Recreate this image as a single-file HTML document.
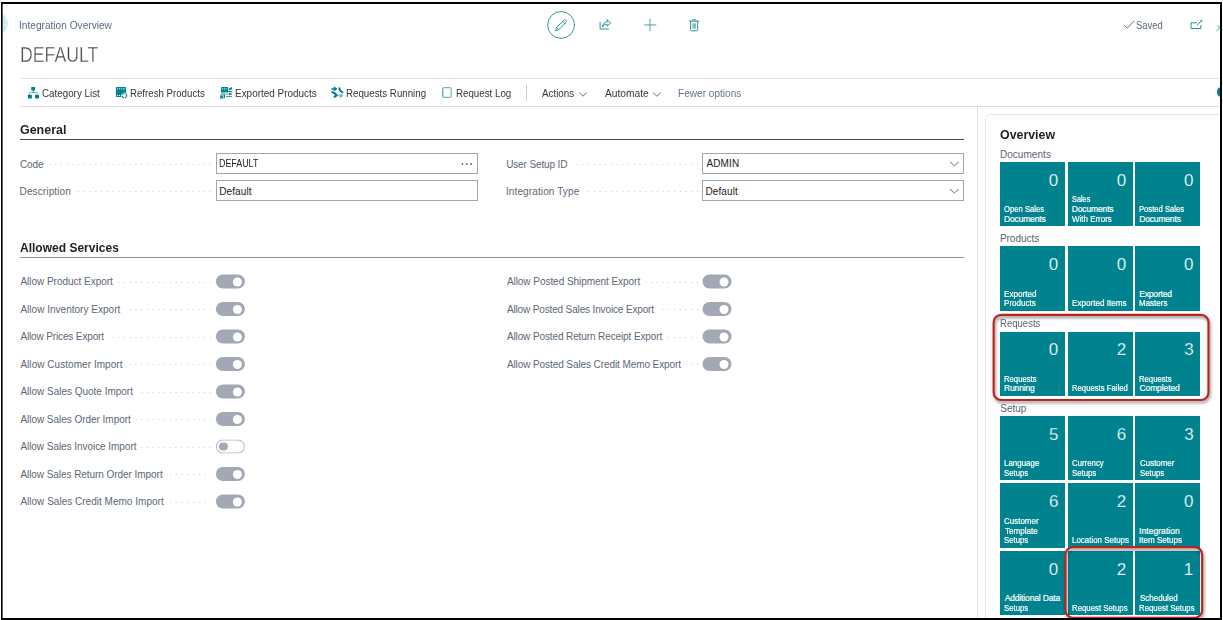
<!DOCTYPE html>
<html lang="en">
<head>
<meta charset="utf-8">
<title>Integration Overview - DEFAULT</title>
<style>
html,body{margin:0;padding:0;background:#fff;}
body{width:1223px;height:620px;position:relative;overflow:hidden;font-family:"Liberation Sans",sans-serif;}
#app{position:absolute;left:0;top:0;width:1223px;height:620px;overflow:hidden;}
.t{position:absolute;white-space:nowrap;line-height:normal;font-family:"Liberation Sans",sans-serif;}
.hl{position:absolute;height:1px;background:#dfe1e7;}
.vl{position:absolute;width:1px;background:#dfe1e7;}
.inp{position:absolute;box-sizing:border-box;height:21px;border:1px solid #9fa5b3;background:#fff;}
.dots{position:absolute;height:1px;background-image:linear-gradient(90deg,rgba(0,0,0,0) 0,rgba(0,0,0,0) 4.74px,#c3c7cf 4.74px,#c3c7cf 5.74px);background-size:5.74px 1px;background-position:right top;background-repeat:repeat-x;}
.tog{position:absolute;left:0;top:0;width:28.8px;height:14.3px;border-radius:7.2px;background:#a2a8b4;}
.tog b{position:absolute;left:17px;top:2.55px;width:9.2px;height:9.2px;border-radius:50%;background:#fff;}
.tog.off{background:#fff;box-shadow:inset 0 0 0 1px #b4b9c3;}
.tog.off b{left:3px;top:2.85px;width:8.6px;height:8.6px;background:#a3aab7;}
.tile{position:absolute;width:64.8px;height:64.3px;background:#00838f;}
.card{position:absolute;left:985px;top:114px;width:260px;height:530px;border:1px solid #e4e6eb;border-radius:5px;box-sizing:border-box;background:#fff;}
svg{position:absolute;left:0;top:0;overflow:visible;}
</style>
</head>
<body>
<div id="app">
  <!-- header -->
  <header>
    <div style="position:absolute;left:-13.4px;top:12.6px;width:21px;height:21px;border-radius:50%;background:#d3eef2"></div>
  </header>

  <!-- toolbar rules -->
  <div class="hl" style="left:20px;top:78px;width:1203px"></div>
  <div class="hl" style="left:20px;top:106px;width:1203px;background:#dcdee3"></div>
  <div class="vl" style="left:526px;top:85px;height:16px;background:#c9ccd3"></div>
  <div style="position:absolute;left:1216.6px;top:87.4px;width:9.6px;height:9.6px;border-radius:50%;background:#00838c"></div>

  <!-- section rules -->
  <div class="hl" style="left:20px;top:139px;width:944px;background:#3f4a5e"></div>
  <div class="hl" style="left:20px;top:257.4px;width:944px;background:#8a93a3"></div>

  <!-- inputs -->
  <div class="inp" style="left:216px;top:153px;width:261.5px"></div>
  <div class="inp" style="left:216px;top:180px;width:261.5px"></div>
  <div class="inp" style="left:702px;top:153px;width:262.4px"></div>
  <div class="inp" style="left:702px;top:180px;width:262.4px"></div>

  <!-- factbox pane -->
  <div class="vl" style="left:977px;top:107px;height:520px"></div>
  <aside class="card"></aside>

<div class="dots" style="left:48.2px;width:162.8px;top:164.00px"></div>
<div class="dots" style="left:75.2px;width:135.8px;top:191.20px"></div>
<div class="dots" style="left:572.0px;width:126.0px;top:164.00px"></div>
<div class="dots" style="left:583.8px;width:114.2px;top:191.20px"></div>
<div class="dots" style="left:117.8px;width:93.2px;top:281.75px"></div>
<div class="dots" style="left:125.2px;width:85.8px;top:309.25px"></div>
<div class="dots" style="left:109.0px;width:102.0px;top:336.75px"></div>
<div class="dots" style="left:127.4px;width:83.6px;top:364.25px"></div>
<div class="dots" style="left:137.9px;width:73.1px;top:391.75px"></div>
<div class="dots" style="left:135.7px;width:75.3px;top:419.25px"></div>
<div class="dots" style="left:141.4px;width:69.6px;top:446.75px"></div>
<div class="dots" style="left:167.6px;width:43.4px;top:474.25px"></div>
<div class="dots" style="left:168.6px;width:42.4px;top:501.75px"></div>
<div class="dots" style="left:645.1px;width:52.9px;top:281.75px"></div>
<div class="dots" style="left:659.0px;width:39.0px;top:309.25px"></div>
<div class="dots" style="left:667.2px;width:30.8px;top:336.75px"></div>
<div class="dots" style="left:686.0px;width:12.0px;top:364.25px"></div>
<div class="tog" style="transform:translate(215.9px,274.50px)"><b></b></div>
<div class="tog" style="transform:translate(215.9px,302.00px)"><b></b></div>
<div class="tog" style="transform:translate(215.9px,329.50px)"><b></b></div>
<div class="tog" style="transform:translate(215.9px,357.00px)"><b></b></div>
<div class="tog" style="transform:translate(215.9px,384.50px)"><b></b></div>
<div class="tog" style="transform:translate(215.9px,412.00px)"><b></b></div>
<div class="tog off" style="transform:translate(215.9px,439.50px)"><b></b></div>
<div class="tog" style="transform:translate(215.9px,467.00px)"><b></b></div>
<div class="tog" style="transform:translate(215.9px,494.50px)"><b></b></div>
<div class="tog" style="transform:translate(702.5px,274.50px)"><b></b></div>
<div class="tog" style="transform:translate(702.5px,302.00px)"><b></b></div>
<div class="tog" style="transform:translate(702.5px,329.50px)"><b></b></div>
<div class="tog" style="transform:translate(702.5px,357.00px)"><b></b></div>
<div class="tile" style="left:1000.1px;top:161.7px"></div>
<div class="tile" style="left:1067.9px;top:161.7px"></div>
<div class="tile" style="left:1135.3px;top:161.7px"></div>
<div class="tile" style="left:1000.1px;top:246.4px"></div>
<div class="tile" style="left:1067.9px;top:246.4px"></div>
<div class="tile" style="left:1135.3px;top:246.4px"></div>
<div class="tile" style="left:1000.1px;top:331.6px"></div>
<div class="tile" style="left:1067.9px;top:331.6px"></div>
<div class="tile" style="left:1135.3px;top:331.6px"></div>
<div class="tile" style="left:1000.1px;top:416.0px"></div>
<div class="tile" style="left:1067.9px;top:416.0px"></div>
<div class="tile" style="left:1135.3px;top:416.0px"></div>
<div class="tile" style="left:1000.1px;top:483.4px"></div>
<div class="tile" style="left:1067.9px;top:483.4px"></div>
<div class="tile" style="left:1135.3px;top:483.4px"></div>
<div class="tile" style="left:1000.1px;top:551.2px"></div>
<div class="tile" style="left:1067.9px;top:551.2px"></div>
<div class="tile" style="left:1135.3px;top:551.2px"></div>

  <svg width="1223" height="620" viewBox="0 0 1223 620">
    <defs>
      <filter id="sh" x="-10%" y="-10%" width="125%" height="130%">
        <feGaussianBlur in="SourceAlpha" stdDeviation="1.4"/>
        <feOffset dx="1.3" dy="2.4"/>
        <feComponentTransfer><feFuncA type="linear" slope="0.5"/></feComponentTransfer>
        <feMerge><feMergeNode/><feMergeNode in="SourceGraphic"/></feMerge>
      </filter>
    </defs>
        <g id="hdr-icons" fill="none" stroke="#00838c" stroke-linecap="round" stroke-linejoin="round">
      <!-- edit -->
      <circle cx="561.1" cy="24.95" r="13.45" stroke-width="0.95" opacity=".85"/>
      <g transform="translate(555.5 30.5) rotate(-43.7)" stroke-width="0.85" opacity=".9">
        <path d="M0 0L3 -1.55H13.1A1.55 1.55 0 0 1 13.1 1.55H3Z"/>
        <path d="M3 -1.55V1.55M11.6 -1.55V1.55"/>
      </g>
      <!-- share -->
      <g stroke-width="0.95" opacity=".9">
        <path d="M600.1 22.4V29H608.6"/>
        <path d="M607.2 19.9L610.7 23L607.2 26.1V24.3C604.9 24.3 603.5 25.1 602.4 27.1C602.6 24 604.5 22 607.2 21.8Z"/>
      </g>
      <!-- new -->
      <path d="M644.3 24.95H655.9M650.05 19.2V30.8" stroke-width="1" opacity=".7"/>
      <!-- delete -->
      <g stroke-width="0.95" opacity=".9">
        <path d="M689.6 21.1H698.6M692.4 21V20.6A1.2 1.2 0 0 1 693.6 19.5H694.7A1.2 1.2 0 0 1 695.9 20.6V21"/>
        <path d="M690.6 21.3V29.6A1.2 1.2 0 0 0 691.8 30.8H696.5A1.2 1.2 0 0 0 697.7 29.6V21.3"/>
        <path d="M692.3 23.3H696V28.6H692.3Z" fill="#00838c" fill-opacity=".55" stroke="none"/>
      </g>
      <!-- saved tick -->
      <path d="M1124.4 25.4L1127.2 28.2L1134.3 20.8" stroke="#596779" stroke-width="0.9"/>
      <!-- open in new window -->
      <g stroke-width="0.95" opacity=".9">
        <path d="M1196.6 22.8H1191V28.5H1200.8V25.4"/>
        <path d="M1197.3 24.7L1201.3 21"/>
        <circle cx="1201.4" cy="20.9" r="0.9" fill="#00838c" stroke="none"/>
      </g>
      <path d="M1216.6 30.9L1221 26.4M1217.8 25.9L1221 27.6" stroke-width="0.9" opacity=".8"/>
    </g>
    <g id="tb-icons" fill="#00838c" stroke="none">
      <!-- category list -->
      <rect x="31.2" y="86.9" width="3.9" height="3.6" rx=".4"/>
      <rect x="32.8" y="90.3" width=".9" height="2.4"/>
      <path d="M29.2 94.9V92.9A.9.9 0 0 1 30.1 92H36.5A.9.9 0 0 1 37.4 92.9V94.9H36.5V93H30.1V94.9Z" opacity=".55"/>
      <rect x="27.9" y="94.8" width="4" height="3.6" rx=".4"/>
      <rect x="35" y="94.8" width="4" height="3.6" rx=".4"/>
      <!-- refresh products -->
      <path d="M116.6 87H125.4A.7.7 0 0 1 126.1 87.7V93.2A3.2 3.2 0 0 0 121.3 96.9H116.6A.7.7 0 0 1 115.9 96.2V87.7A.7.7 0 0 1 116.6 87Z"/>
      <g fill="#fff"><rect x="117.1" y="88.2" width=".7" height="1.3"/><rect x="119" y="88.2" width=".7" height="1.3"/><rect x="120.9" y="88.2" width=".7" height="1.3"/><rect x="122.8" y="88.2" width=".7" height="1.3"/><rect x="124.4" y="88.2" width=".7" height="1.3"/><rect x="117" y="95" width="1" height="1"/><rect x="119" y="95" width="1" height="1"/></g>
      <circle cx="124.4" cy="95.6" r="2.3" fill="none" stroke="#00838c" stroke-width="1.3" stroke-dasharray="2.6 1" opacity=".85"/>
      <!-- exported products -->
      <rect x="221" y="87" width="7.1" height="5.3" rx=".5"/>
      <g fill="#fff" opacity=".9"><rect x="222.1" y="88.1" width=".8" height="1.5"/><rect x="223.9" y="88.1" width=".8" height="1.5"/><rect x="225.7" y="88.1" width=".8" height="1.5"/></g>
      <rect x="221" y="92.3" width="4.4" height="3.2" opacity=".5"/>
      <rect x="225.4" y="92.3" width="2.7" height="1.2" opacity=".35"/>
      <rect x="220" y="95.4" width="3.3" height="3.2" opacity=".9"/>
      <rect x="223.9" y="94.6" width="1.1" height="3.4"/>
      <path d="M228.8 88.6L232 86.9V89.2L228.8 90.4Z"/>
      <rect x="228.4" y="91" width="3.6" height="1"/>
      <rect x="228.8" y="92.8" width="2.8" height="2.4" opacity=".85"/>
      <path d="M226 94.2H228.4V95H226ZM226 96H232V96.9H226Z" opacity=".75"/>
      <!-- requests running -->
      <g stroke="#00838c" stroke-linecap="round" fill="none">
        <path d="M331.9 88.9H335.6" stroke-width="1.5"/>
        <path d="M334.4 87.1L336.9 88.9L334.4 90.7Z" fill="#00838c" stroke-width=".9"/>
        <path d="M339.4 88.3L339.8 90.2L342.3 92.3" stroke-width="2.1"/>
        <path d="M332.3 92.1L334.8 93.4L336.8 95.2" stroke-width="2.1"/>
        <path d="M334.8 96.6L336.2 95.6" stroke-width="2.3"/>
        <path d="M339.2 95.6L341.6 95.7" stroke-width="2.2" opacity=".5"/>
        <path d="M340.4 97.5L342.4 95.5L341 94.2" stroke-width="1" opacity=".55"/>
      </g>
      <!-- request log -->
      <rect x="442.7" y="87.7" width="8.5" height="9.6" rx="1.3" fill="none" stroke="#00838c" stroke-width="1.2" opacity=".55"/>
      <path d="M442 89.7H443.6M442 91.7H443.6M442 93.7H443.6M442 95.5H443.6" stroke="#00838c" stroke-width=".6" opacity=".7"/>
    </g>
    <g id="chevrons" fill="none" stroke="#4a4a4a" stroke-width=".8" stroke-linecap="round" stroke-linejoin="round">
      <path d="M579.5 92.9L582.9 96.2L586.3 92.9"/>
      <path d="M653.4 92.9L656.9 96.2L660.4 92.9"/>
      <path d="M950.2 162L954.4 165.8L958.6 162"/>
      <path d="M950.2 189.2L954.4 193L958.6 189.2"/>
    </g>
    <g fill="#3a3a3a"><rect x="461.7" y="163.4" width="1.4" height="1.4"/><rect x="466.1" y="163.4" width="1.4" height="1.4"/><rect x="470.4" y="163.4" width="1.4" height="1.4"/></g>

    <!-- highlight callouts -->
    <rect x="993.65" y="314.85" width="214.85" height="85.1" rx="7.5" ry="7.5" fill="none" stroke="#bd211b" stroke-width="2.1" filter="url(#sh)"/>
    <rect x="1065.5" y="547.1" width="136.65" height="70.6" rx="7.5" ry="7.5" fill="none" stroke="#bd211b" stroke-width="2.1" filter="url(#sh)"/>
    <!-- outer frame -->
    <path d="M0 0H1223V620H0ZM1 2H1222V620H1Z" fill="#fff" fill-rule="evenodd"/>
    <path d="M1 2H1222V620H1V2ZM2.6 4V618H1220V4Z" fill="#000" fill-rule="evenodd"/>
  </svg>

<span class="t" style="top:19.70px;font-size:10px;color:#5a6b80;left:19.27px;transform:scaleX(1.0130);transform-origin:0 0">Integration Overview</span>
<span class="t" style="top:42.00px;font-size:22px;color:#444;left:20.45px;transform:scaleX(0.8046);transform-origin:0 0;-webkit-text-stroke:0.4px #fff">DEFAULT</span>
<span class="t" style="top:19.60px;font-size:10px;color:#596779;left:1135.97px;transform:scaleX(0.9464);transform-origin:0 0">Saved</span>
<span class="t" style="top:88.10px;font-size:10px;color:#363636;left:42.10px;transform:scaleX(0.9804);transform-origin:0 0">Category List</span>
<span class="t" style="top:88.10px;font-size:10px;color:#363636;left:130.11px;transform:scaleX(0.9674);transform-origin:0 0">Refresh Products</span>
<span class="t" style="top:88.10px;font-size:10px;color:#363636;left:234.58px;transform:scaleX(0.9940);transform-origin:0 0">Exported Products</span>
<span class="t" style="top:88.10px;font-size:10px;color:#363636;left:345.80px;transform:scaleX(0.9738);transform-origin:0 0">Requests Running</span>
<span class="t" style="top:88.10px;font-size:10px;color:#363636;left:455.80px;transform:scaleX(0.9737);transform-origin:0 0">Request Log</span>
<span class="t" style="top:88.10px;font-size:10px;color:#363636;left:541.98px;transform:scaleX(0.9810);transform-origin:0 0">Actions</span>
<span class="t" style="top:88.10px;font-size:10px;color:#363636;left:604.98px;transform:scaleX(1.0225);transform-origin:0 0">Automate</span>
<span class="t" style="top:88.10px;font-size:10px;color:#66768c;left:677.77px;transform:scaleX(1.0076);transform-origin:0 0">Fewer options</span>
<span class="t" style="top:121.60px;font-size:13px;color:#1f1f1f;left:19.89px;font-weight:700;transform:scaleX(0.9581);transform-origin:0 0">General</span>
<span class="t" style="top:240.00px;font-size:13px;color:#1f1f1f;left:20.10px;font-weight:700;transform:scaleX(0.9246);transform-origin:0 0">Allowed Services</span>
<span class="t" style="top:158.50px;font-size:10px;color:#5c6775;left:19.89px;letter-spacing:-0.051px">Code</span>
<span class="t" style="top:185.70px;font-size:10px;color:#5c6775;left:19.58px;letter-spacing:0.124px">Description</span>
<span class="t" style="top:158.30px;font-size:10px;color:#212121;left:219.27px;transform:scaleX(0.8882);transform-origin:0 0">DEFAULT</span>
<span class="t" style="top:185.70px;font-size:10px;color:#212121;left:219.18px;letter-spacing:0.118px">Default</span>
<span class="t" style="top:158.50px;font-size:10px;color:#5c6775;left:506.13px;letter-spacing:-0.122px">User Setup ID</span>
<span class="t" style="top:185.70px;font-size:10px;color:#5c6775;left:505.98px;letter-spacing:0.115px">Integration Type</span>
<span class="t" style="top:158.30px;font-size:10px;color:#212121;left:706.58px;letter-spacing:0.075px">ADMIN</span>
<span class="t" style="top:185.70px;font-size:10px;color:#212121;left:705.38px;letter-spacing:0.118px">Default</span>
<span class="t" style="top:276.35px;font-size:10px;color:#5c6775;left:20.38px;letter-spacing:-0.018px">Allow Product Export</span>
<span class="t" style="top:303.85px;font-size:10px;color:#5c6775;left:20.38px;letter-spacing:0.019px">Allow Inventory Export</span>
<span class="t" style="top:331.35px;font-size:10px;color:#5c6775;left:20.38px;letter-spacing:-0.136px">Allow Prices Export</span>
<span class="t" style="top:358.85px;font-size:10px;color:#5c6775;left:20.38px;letter-spacing:0.048px">Allow Customer Import</span>
<span class="t" style="top:386.35px;font-size:10px;color:#5c6775;left:20.38px;letter-spacing:-0.010px">Allow Sales Quote Import</span>
<span class="t" style="top:413.85px;font-size:10px;color:#5c6775;left:20.38px;letter-spacing:-0.033px">Allow Sales Order Import</span>
<span class="t" style="top:441.35px;font-size:10px;color:#5c6775;left:20.38px;letter-spacing:-0.048px">Allow Sales Invoice Import</span>
<span class="t" style="top:468.85px;font-size:10px;color:#5c6775;left:20.38px;letter-spacing:-0.055px">Allow Sales Return Order Import</span>
<span class="t" style="top:496.35px;font-size:10px;color:#5c6775;left:20.38px;letter-spacing:0.016px">Allow Sales Credit Memo Import</span>
<span class="t" style="top:276.35px;font-size:10px;color:#5c6775;left:506.88px;letter-spacing:-0.045px">Allow Posted Shipment Export</span>
<span class="t" style="top:303.85px;font-size:10px;color:#5c6775;left:506.88px;letter-spacing:-0.142px">Allow Posted Sales Invoice Export</span>
<span class="t" style="top:331.35px;font-size:10px;color:#5c6775;left:506.88px;letter-spacing:-0.108px">Allow Posted Return Receipt Export</span>
<span class="t" style="top:358.85px;font-size:10px;color:#5c6775;left:506.88px;letter-spacing:-0.086px">Allow Posted Sales Credit Memo Export</span>
<span class="t" style="top:126.70px;font-size:13px;color:#1f1f1f;left:999.99px;font-weight:700;transform:scaleX(0.9525);transform-origin:0 0">Overview</span>
<span class="t" style="top:148.55px;font-size:10px;color:#5a6472;left:999.88px;letter-spacing:0.063px">Documents</span>
<span class="t" style="top:170.50px;font-size:17px;color:#ffffff;right:164.69px;-webkit-text-stroke:0.25px #00838f">0</span>
<span class="t" style="top:203.80px;font-size:8.5px;color:#ffffff;left:1004.34px;transform:scaleX(0.9036);transform-origin:0 0;-webkit-text-stroke:0.2px #fff">Open Sales</span>
<span class="t" style="top:213.50px;font-size:8.5px;color:#ffffff;left:1004.00px;letter-spacing:-0.162px;-webkit-text-stroke:0.2px #fff">Documents</span>
<span class="t" style="top:170.50px;font-size:17px;color:#ffffff;right:96.89px;-webkit-text-stroke:0.25px #00838f">0</span>
<span class="t" style="top:194.10px;font-size:8.5px;color:#ffffff;left:1072.17px;transform:scaleX(0.8604);transform-origin:0 0;-webkit-text-stroke:0.2px #fff">Sales</span>
<span class="t" style="top:203.80px;font-size:8.5px;color:#ffffff;left:1071.80px;letter-spacing:-0.149px;-webkit-text-stroke:0.2px #fff">Documents</span>
<span class="t" style="top:213.50px;font-size:8.5px;color:#ffffff;left:1072.46px;transform:scaleX(0.9370);transform-origin:0 0;-webkit-text-stroke:0.2px #fff">With Errors</span>
<span class="t" style="top:170.50px;font-size:17px;color:#ffffff;right:29.49px;-webkit-text-stroke:0.25px #00838f">0</span>
<span class="t" style="top:203.80px;font-size:8.5px;color:#ffffff;left:1139.27px;transform:scaleX(0.9004);transform-origin:0 0;-webkit-text-stroke:0.2px #fff">Posted Sales</span>
<span class="t" style="top:213.50px;font-size:8.5px;color:#ffffff;left:1139.20px;letter-spacing:-0.162px;-webkit-text-stroke:0.2px #fff">Documents</span>
<span class="t" style="top:233.25px;font-size:10px;color:#5a6472;left:999.88px;letter-spacing:-0.012px">Products</span>
<span class="t" style="top:255.20px;font-size:17px;color:#ffffff;right:164.69px;-webkit-text-stroke:0.25px #00838f">0</span>
<span class="t" style="top:288.50px;font-size:8.5px;color:#ffffff;left:1004.03px;transform:scaleX(0.9577);transform-origin:0 0;-webkit-text-stroke:0.2px #fff">Exported</span>
<span class="t" style="top:298.20px;font-size:8.5px;color:#ffffff;left:1004.04px;transform:scaleX(0.9495);transform-origin:0 0;-webkit-text-stroke:0.2px #fff">Products</span>
<span class="t" style="top:255.20px;font-size:17px;color:#ffffff;right:96.89px;-webkit-text-stroke:0.25px #00838f">0</span>
<span class="t" style="top:298.20px;font-size:8.5px;color:#ffffff;left:1071.83px;transform:scaleX(0.9561);transform-origin:0 0;-webkit-text-stroke:0.2px #fff">Exported Items</span>
<span class="t" style="top:255.20px;font-size:17px;color:#ffffff;right:29.49px;-webkit-text-stroke:0.25px #00838f">0</span>
<span class="t" style="top:288.50px;font-size:8.5px;color:#ffffff;left:1139.20px;letter-spacing:-0.169px;-webkit-text-stroke:0.2px #fff">Exported</span>
<span class="t" style="top:298.20px;font-size:8.5px;color:#ffffff;left:1139.24px;transform:scaleX(0.9408);transform-origin:0 0;-webkit-text-stroke:0.2px #fff">Masters</span>
<span class="t" style="top:318.45px;font-size:10px;color:#5a6472;left:999.92px;transform:scaleX(0.9545);transform-origin:0 0">Requests</span>
<span class="t" style="top:340.40px;font-size:17px;color:#ffffff;right:164.69px;-webkit-text-stroke:0.25px #00838f">0</span>
<span class="t" style="top:373.70px;font-size:8.5px;color:#ffffff;left:1004.07px;transform:scaleX(0.9079);transform-origin:0 0;-webkit-text-stroke:0.2px #fff">Requests</span>
<span class="t" style="top:383.40px;font-size:8.5px;color:#ffffff;left:1004.00px;letter-spacing:-0.154px;-webkit-text-stroke:0.2px #fff">Running</span>
<span class="t" style="top:340.40px;font-size:17px;color:#ffffff;right:96.70px;-webkit-text-stroke:0.25px #00838f">2</span>
<span class="t" style="top:383.40px;font-size:8.5px;color:#ffffff;left:1071.87px;transform:scaleX(0.9073);transform-origin:0 0;-webkit-text-stroke:0.2px #fff">Requests Failed</span>
<span class="t" style="top:340.40px;font-size:17px;color:#ffffff;right:29.40px;-webkit-text-stroke:0.25px #00838f">3</span>
<span class="t" style="top:373.70px;font-size:8.5px;color:#ffffff;left:1139.27px;transform:scaleX(0.9079);transform-origin:0 0;-webkit-text-stroke:0.2px #fff">Requests</span>
<span class="t" style="top:383.40px;font-size:8.5px;color:#ffffff;left:1139.47px;letter-spacing:-0.104px;-webkit-text-stroke:0.2px #fff">Completed</span>
<span class="t" style="top:402.85px;font-size:10px;color:#5a6472;left:1000.25px;letter-spacing:0.008px">Setup</span>
<span class="t" style="top:424.80px;font-size:17px;color:#ffffff;right:164.64px;-webkit-text-stroke:0.25px #00838f">5</span>
<span class="t" style="top:458.10px;font-size:8.5px;color:#ffffff;left:1004.05px;transform:scaleX(0.9333);transform-origin:0 0;-webkit-text-stroke:0.2px #fff">Language</span>
<span class="t" style="top:467.80px;font-size:8.5px;color:#ffffff;left:1004.35px;transform:scaleX(0.9156);transform-origin:0 0;-webkit-text-stroke:0.2px #fff">Setups</span>
<span class="t" style="top:424.80px;font-size:17px;color:#ffffff;right:96.80px;-webkit-text-stroke:0.25px #00838f">6</span>
<span class="t" style="top:458.10px;font-size:8.5px;color:#ffffff;left:1072.10px;transform:scaleX(0.9196);transform-origin:0 0;-webkit-text-stroke:0.2px #fff">Currency</span>
<span class="t" style="top:467.80px;font-size:8.5px;color:#ffffff;left:1072.15px;transform:scaleX(0.9156);transform-origin:0 0;-webkit-text-stroke:0.2px #fff">Setups</span>
<span class="t" style="top:424.80px;font-size:17px;color:#ffffff;right:29.40px;-webkit-text-stroke:0.25px #00838f">3</span>
<span class="t" style="top:458.10px;font-size:8.5px;color:#ffffff;left:1139.50px;transform:scaleX(0.9346);transform-origin:0 0;-webkit-text-stroke:0.2px #fff">Customer</span>
<span class="t" style="top:467.80px;font-size:8.5px;color:#ffffff;left:1139.55px;transform:scaleX(0.9156);transform-origin:0 0;-webkit-text-stroke:0.2px #fff">Setups</span>
<span class="t" style="top:492.20px;font-size:17px;color:#ffffff;right:164.60px;-webkit-text-stroke:0.25px #00838f">6</span>
<span class="t" style="top:515.80px;font-size:8.5px;color:#ffffff;left:1004.30px;transform:scaleX(0.9374);transform-origin:0 0;-webkit-text-stroke:0.2px #fff">Customer</span>
<span class="t" style="top:525.50px;font-size:8.5px;color:#ffffff;left:1004.52px;transform:scaleX(0.9519);transform-origin:0 0;-webkit-text-stroke:0.2px #fff">Template</span>
<span class="t" style="top:535.20px;font-size:8.5px;color:#ffffff;left:1004.35px;transform:scaleX(0.9156);transform-origin:0 0;-webkit-text-stroke:0.2px #fff">Setups</span>
<span class="t" style="top:492.20px;font-size:17px;color:#ffffff;right:96.70px;-webkit-text-stroke:0.25px #00838f">2</span>
<span class="t" style="top:535.20px;font-size:8.5px;color:#ffffff;left:1071.85px;transform:scaleX(0.9339);transform-origin:0 0;-webkit-text-stroke:0.2px #fff">Location Setups</span>
<span class="t" style="top:492.20px;font-size:17px;color:#ffffff;right:29.49px;-webkit-text-stroke:0.25px #00838f">0</span>
<span class="t" style="top:525.50px;font-size:8.5px;color:#ffffff;left:1139.12px;letter-spacing:0.046px;-webkit-text-stroke:0.2px #fff">Integration</span>
<span class="t" style="top:535.20px;font-size:8.5px;color:#ffffff;left:1139.15px;transform:scaleX(0.9510);transform-origin:0 0;-webkit-text-stroke:0.2px #fff">Item Setups</span>
<span class="t" style="top:560.00px;font-size:17px;color:#ffffff;right:164.69px;-webkit-text-stroke:0.25px #00838f">0</span>
<span class="t" style="top:593.30px;font-size:8.5px;color:#ffffff;left:1004.68px;letter-spacing:-0.146px;-webkit-text-stroke:0.2px #fff">Additional Data</span>
<span class="t" style="top:603.00px;font-size:8.5px;color:#ffffff;left:1004.35px;transform:scaleX(0.9156);transform-origin:0 0;-webkit-text-stroke:0.2px #fff">Setups</span>
<span class="t" style="top:560.00px;font-size:17px;color:#ffffff;right:96.70px;-webkit-text-stroke:0.25px #00838f">2</span>
<span class="t" style="top:603.00px;font-size:8.5px;color:#ffffff;left:1071.86px;transform:scaleX(0.9196);transform-origin:0 0;-webkit-text-stroke:0.2px #fff">Request Setups</span>
<span class="t" style="top:560.00px;font-size:17px;color:#ffffff;right:29.87px;-webkit-text-stroke:0.25px #00838f">1</span>
<span class="t" style="top:593.30px;font-size:8.5px;color:#ffffff;left:1139.54px;transform:scaleX(0.9404);transform-origin:0 0;-webkit-text-stroke:0.2px #fff">Scheduled</span>
<span class="t" style="top:603.00px;font-size:8.5px;color:#ffffff;left:1139.26px;transform:scaleX(0.9196);transform-origin:0 0;-webkit-text-stroke:0.2px #fff">Request Setups</span>
</div>
</body>
</html>
